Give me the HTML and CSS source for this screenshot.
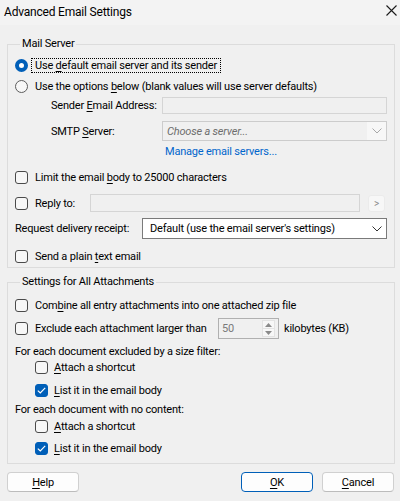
FILE: index.html
```html
<!DOCTYPE html>
<html>
<head>
<meta charset="utf-8">
<title>Advanced Email Settings</title>
<link rel="stylesheet" href="styles.css">
</head>
<body>
<div class="dialog">
  <div class="titlebar">
    <span class="title">Advanced Email Settings</span>
    <svg class="close" width="11" height="11" viewBox="0 0 11 11"><path d="M0.5 0.5 L10.5 10.5 M10.5 0.5 L0.5 10.5" stroke="#1a1a1a" stroke-width="1.1" fill="none"/></svg>
  </div>
  <div class="content">
    <fieldset class="group group-mail">
      <legend>Mail Server</legend>
      <div class="row r-radio1"><span class="radio on"></span><span class="label focus">Use <u>d</u>efault email server and its sender</span></div>
      <div class="row r-radio2"><span class="radio"></span><span class="label">Use the options <u>b</u>elow (blank values will use server defaults)</span></div>
      <div class="row r-sender"><span class="flabel">Sender <u>E</u>mail Address:</span><span class="input disabled"></span></div>
      <div class="row r-smtp"><span class="flabel">SMTP <u>S</u>erver:</span>
        <span class="select disabled"><span class="ph">Choose a server...</span><span class="chev"><svg width="10" height="6" viewBox="0 0 10 6"><path d="M0.5 0.5 L5 5 L9.5 0.5" stroke="#a8a8a8" fill="none"/></svg></span></span>
      </div>
      <div class="row r-link"><span class="link">Manage email servers...</span></div>
      <div class="row r-limit"><span class="check"></span><span class="label">Limit the email <u>b</u>ody to 25000 characters</span></div>
      <div class="row r-reply"><span class="check"></span><span class="label reply-label">Reply to:</span><span class="input disabled reply-input"></span><span class="mini-btn">&gt;</span></div>
      <div class="row r-receipt"><span class="rlabel">Request delivery receipt:</span>
        <span class="select"><span class="val">Default (use the email server's settings)</span><span class="chev"><svg width="10" height="6" viewBox="0 0 10 6"><path d="M0.5 0.5 L5 5 L9.5 0.5" stroke="#333" fill="none"/></svg></span></span>
      </div>
      <div class="row r-plain"><span class="check"></span><span class="label">Send a plain <u>t</u>ext email</span></div>
    </fieldset>

    <fieldset class="group group-att">
      <legend>Settings for All Attachments</legend>
      <div class="row r-combine"><span class="check"></span><span class="label">Com<u>b</u>ine all entry attachments into one attached zip file</span></div>
      <div class="row r-exclude"><span class="check"></span><span class="label exclude-label">Exclude each attachment larger than</span>
        <span class="spin"><span class="spin-val">50</span><span class="spin-btns"><span class="spin-up"><svg width="7" height="4" viewBox="0 0 7 4"><path d="M0 4 L3.5 0 L7 4 Z" fill="#8a8a8a"/></svg></span><span class="spin-down"><svg width="7" height="4" viewBox="0 0 7 4"><path d="M0 0 L3.5 4 L7 0 Z" fill="#8a8a8a"/></svg></span></span></span>
        <span class="unit">kilobytes (KB)</span>
      </div>
      <div class="row r-each1"><span class="text">For each document excluded by a size filter:</span></div>
      <div class="row sub r-attach1"><span class="check"></span><span class="label"><u>A</u>ttach a shortcut</span></div>
      <div class="row sub r-list1"><span class="check on"><svg width="9" height="7" viewBox="0 0 9 7"><path d="M0.8 3.6 L3.3 6 L8.2 0.9" stroke="#fff" stroke-width="1.2" fill="none"/></svg></span><span class="label"><u>L</u>ist it in the email body</span></div>
      <div class="row r-each2"><span class="text">For each document with no content:</span></div>
      <div class="row sub r-attach2"><span class="check"></span><span class="label"><u>A</u>ttach a shortcut</span></div>
      <div class="row sub r-list2"><span class="check on"><svg width="9" height="7" viewBox="0 0 9 7"><path d="M0.8 3.6 L3.3 6 L8.2 0.9" stroke="#fff" stroke-width="1.2" fill="none"/></svg></span><span class="label"><u>L</u>ist it in the email body</span></div>
    </fieldset>

    <div class="buttons">
      <span class="btn"><u>H</u>elp</span>
      <span class="spacer"></span>
      <span class="btn default"><u>O</u>K</span>
      <span class="btn"><u>C</u>ancel</span>
    </div>
  </div>
</div>
</body>
</html>
```

FILE: styles.css
```css
html, body {
  margin: 0;
  padding: 0;
}
body {
  width: 400px;
  height: 501px;
  background: #f0f0f0;
  font-family: "Roboto", "Liberation Sans", sans-serif;
  font-size: 11px;
  letter-spacing: -0.2px;
  color: #000;
  overflow: hidden;
}
u {
  text-decoration-thickness: 1px;
  text-underline-offset: 1.5px;
}
.titlebar {
  height: 25px;
  background: #f3f3f3;
  display: flex;
  align-items: center;
  justify-content: space-between;
  padding: 0 3px 0 4px;
}
.title {
  font-size: 12px;
  line-height: 16px;
  margin-top: -2px;
}
.close {
  margin-top: -5px;
}
.content {
  padding: 0 5px 0 7px;
}
.group {
  margin: 11px 0 0 0;
  padding: 0 7px;
  border: 1px solid #dcdcdc;
  min-width: 0;
}
.group legend {
  margin-left: 5px;
  padding: 0 2px;
  line-height: 16px;
  height: 16px;
}
.group-mail {
  padding-top: 5px;
  padding-bottom: 3px;
}
.group-att {
  margin-top: 6px;
  padding-top: 7px;
  padding-bottom: 7px;
}
.row {
  display: flex;
  align-items: center;
  height: 16px;
  white-space: nowrap;
}
.radio {
  width: 13px;
  height: 13px;
  box-sizing: border-box;
  border: 1px solid #5c5c5c;
  border-radius: 50%;
  background: #f7f7f7;
  flex: none;
  margin-right: 7px;
}
.radio.on {
  border: 4px solid #005fb8;
  background: #fff;
  margin-right: 3px;
}
.label.focus {
  border: 1px dotted #000;
  padding: 0 3px;
  line-height: 13px;
  height: 13px;
}
.check {
  width: 13px;
  height: 13px;
  box-sizing: border-box;
  border: 1px solid #4a4a4a;
  border-radius: 3px;
  background: #f7f7f7;
  flex: none;
  margin-right: 7px;
  display: flex;
  align-items: center;
  justify-content: center;
}
.check.on {
  background: #005fb8;
  border-color: #005fb8;
}
.r-radio2 { margin-top: 5px; }
.r-sender { margin-top: 3px; height: 17px; }
.r-smtp { margin-top: 7px; height: 20px; }
.r-link { margin-top: 2px; }
.r-limit { margin-top: 10px; }
.r-reply { margin-top: 9px; height: 18px; }
.r-receipt { margin-top: 6px; height: 21px; }
.r-plain { margin-top: 9px; }
.flabel {
  width: 111px;
  margin-left: 36px;
  flex: none;
}
.input {
  flex: 1;
  height: 100%;
  box-sizing: border-box;
  border: 1px solid #d5d5d5;
  background: #f0f0f0;
}
.select {
  flex: 1;
  height: 100%;
  box-sizing: border-box;
  border: 1px solid #7a7a7a;
  background: #fff;
  display: flex;
  align-items: center;
}
.select.disabled {
  border-color: #cccccc;
  background: #f0f0f0;
}
.select .ph {
  flex: 1;
  padding-left: 4px;
  font-style: italic;
  color: #6d6d6d;
}
.select .val {
  flex: 1;
  padding-left: 7px;
}
.chev {
  width: 19px;
  height: 100%;
  display: flex;
  align-items: center;
  justify-content: center;
  flex: none;
}
.select.disabled .chev {
  background: #f7f7f7;
}
.link {
  margin-left: 150px;
  color: #0066cc;
}
.reply-label {
  width: 55px;
  flex: none;
}
.reply-input {
  margin-right: 8px;
}
.mini-btn {
  width: 17px;
  height: 17px;
  box-sizing: border-box;
  border-radius: 3px;
  background: #f7f7f7;
  border: 1px solid #ebebeb;
  color: #8a8a8a;
  font-size: 10px;
  display: flex;
  align-items: center;
  justify-content: center;
  margin-right: 2px;
  flex: none;
}
.rlabel {
  width: 127px;
  flex: none;
}
.r-exclude { margin-top: 5px; height: 21px; }
.r-each1 { margin-top: 4px; }
.r-list1 { margin-top: 7px; }
.r-each2 { margin-top: 3px; }
.r-attach2 { margin-top: 1px; }
.r-list2 { margin-top: 6px; }
.sub {
  padding-left: 20px;
}
.sub .check {
  margin-right: 6px;
}
.exclude-label {
  width: 183px;
  flex: none;
}
.spin {
  width: 61px;
  height: 21px;
  box-sizing: border-box;
  border: 1px solid #b0b0b0;
  background: #f0f0f0;
  display: flex;
  align-items: center;
  flex: none;
}
.spin-val {
  flex: 1;
  padding-left: 3px;
  color: #7a7a7a;
}
.spin-btns {
  width: 13px;
  height: 17px;
  display: flex;
  flex-direction: column;
  margin-right: 3px;
}
.spin-up, .spin-down {
  flex: 1;
  display: flex;
  align-items: center;
  justify-content: center;
  background: #f7f7f7;
  border: 1px solid #e3e3e3;
}
.spin-down {
  border-top: none;
}
.unit {
  margin-left: 5px;
}
.buttons {
  display: flex;
  gap: 9px;
  margin-top: 8px;
  padding-right: 1px;
}
.spacer {
  flex: 1;
}
.btn {
  width: 72px;
  height: 20px;
  box-sizing: border-box;
  border: 1px solid #d0d0d0;
  border-bottom-color: #bcbcbc;
  border-radius: 4px;
  background: #fdfdfd;
  display: flex;
  align-items: center;
  justify-content: center;
}
.btn.default {
  border-color: #005fb8;
}
```
